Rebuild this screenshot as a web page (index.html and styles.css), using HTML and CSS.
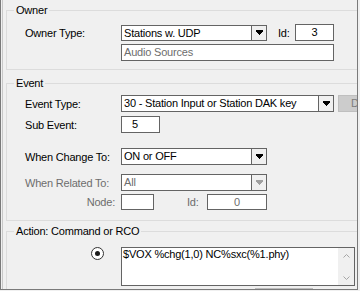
FILE: index.html
```html
<html>

<head>
    <title>Event Action</title>
    <link rel="stylesheet" href="styles.css">
</head>

<body>
    <div class="panel">
        <div class="sheet">
            <fieldset class="group owner">
                <legend>Owner</legend>
                <div class="row">
                    <span class="lbl">Owner Type:</span>
                    <div class="combo short">
                        <span class="val">Stations w. UDP</span>
                        <span class="drop"><svg width="7" height="5" viewBox="0 0 7 5"><path d="M0 0H7V2H6V3H5V4H4V5H3V4H2V3H1V2H0Z" fill="#000" shape-rendering="crispEdges"/></svg></span>
                    </div>
                    <span class="lbl-id">Id:</span>
                    <div class="box id center">3</div>
                </div>
                <div class="row gap3">
                    <span class="lbl"></span>
                    <div class="box long muted">Audio Sources</div>
                </div>
            </fieldset>

            <fieldset class="group event">
                <legend>Event</legend>
                <div class="row">
                    <span class="lbl">Event Type:</span>
                    <div class="combo long">
                        <span class="val">30 - Station Input or Station DAK key</span>
                        <span class="drop"><svg width="7" height="5" viewBox="0 0 7 5"><path d="M0 0H7V2H6V3H5V4H4V5H3V4H2V3H1V2H0Z" fill="#000" shape-rendering="crispEdges"/></svg></span>
                    </div>
                    <span class="btn">Details...</span>
                </div>
                <div class="row gap4">
                    <span class="lbl">Sub Event:</span>
                    <div class="box sub">5</div>
                </div>
                <div class="row gap15">
                    <span class="lbl">When Change To:</span>
                    <div class="combo short">
                        <span class="val">ON or OFF</span>
                        <span class="drop"><svg width="7" height="5" viewBox="0 0 7 5"><path d="M0 0H7V2H6V3H5V4H4V5H3V4H2V3H1V2H0Z" fill="#000" shape-rendering="crispEdges"/></svg></span>
                    </div>
                </div>
                <div class="row gap9">
                    <span class="lbl muted">When Related To:</span>
                    <div class="combo short">
                        <span class="val muted">All</span>
                        <span class="drop"><svg width="7" height="5" viewBox="0 0 7 5"><path d="M0 0H7V2H6V3H5V4H4V5H3V4H2V3H1V2H0Z" fill="#a0a0a0" shape-rendering="crispEdges"/></svg></span>
                    </div>
                </div>
                <div class="row gap3 small">
                    <span class="lbl right muted">Node:</span>
                    <div class="box node"></div>
                    <span class="lbl-id2 muted">Id:</span>
                    <div class="box id2 center muted">0</div>
                </div>
            </fieldset>

            <fieldset class="group action">
                <legend>Action: Command or RCO</legend>
                <div class="row top">
                    <span class="lbl radio-cell"><span class="radio"><span class="dot"></span></span></span>
                    <div class="memo">
                        <div class="memo-text">$VOX %chg(1,0) NC%sxc(%1.phy)</div>
                        <div class="vscroll">
                            <svg width="7" height="4" viewBox="0 0 7 4"><path d="M0.5 3.5L3.5 0.5L6.5 3.5" fill="none" stroke="#a6a6a6"/></svg>
                            <svg width="7" height="4" viewBox="0 0 7 4"><path d="M0.5 0.5L3.5 3.5L6.5 0.5" fill="none" stroke="#a6a6a6"/></svg>
                        </div>
                    </div>
                </div>
            </fieldset>
        </div>
        <div class="hthumb"></div>
    </div>
</body>

</html>
```

FILE: styles.css
```css
body {
    margin: 0;
    background: #f0f0f0;
    font-family: 'Liberation Sans', Arial, sans-serif;
    font-size: 11px;
    letter-spacing: -0.2px;
    color: #000;
}

.panel {
    position: relative;
    width: 358px;
    height: 290px;
    box-sizing: border-box;
    border: 1px solid #7a7a7a;
    border-top: 0;
    overflow: hidden;
    box-shadow: inset 1px 0 #f0f0f0, inset 2px 0 #c8c8c8;
}

.sheet {
    width: 440px;
    padding-top: 4px;
}

/* Group boxes */

.group {
    margin: 0 0 0 5px;
    border: 1px solid #dcdcdc;
    padding: 0;
    min-width: 0;
}

.group legend {
    margin-left: 7px;
    padding: 0 2px;
    line-height: 13px;
}

.owner {
    padding: 7px 0 8px;
}

.event {
    margin-top: 7px;
    padding: 5px 0 10px;
}

.action {
    margin-top: 4px;
    padding: 9px 0 12px;
}

/* Rows */

.row {
    display: flex;
    align-items: center;
    padding-left: 18px;
}

.row.top {
    align-items: flex-start;
}

.gap3 { margin-top: 3px; }
.gap4 { margin-top: 4px; }
.gap9 { margin-top: 9px; }
.gap15 { margin-top: 15px; }

.lbl {
    width: 96px;
    flex: none;
    white-space: nowrap;
}

.lbl.right {
    box-sizing: border-box;
    text-align: right;
    padding-right: 6px;
}

.lbl-id {
    width: 17px;
    margin-left: 11px;
}

.lbl-id2 {
    width: 20px;
    margin-left: 33px;
}

.muted {
    color: #6d6d6d;
}

/* Controls */

.combo {
    display: flex;
    box-sizing: border-box;
    height: 17px;
    border: 1px solid #646464;
    background: #fff;
}

.owner .combo {
    height: 16px;
}

.combo .val {
    flex: 1;
    padding-left: 2px;
    line-height: 15px;
    white-space: nowrap;
    overflow: hidden;
}

.owner .combo .val {
    line-height: 14px;
}

.combo .drop {
    width: 14px;
    border-left: 1px solid #646464;
    background: #f0f0f0;
    display: flex;
    align-items: center;
    justify-content: center;
}

.short { width: 146px; }
.long { width: 213px; }

.box {
    box-sizing: border-box;
    height: 17px;
    border: 1px solid #646464;
    background: #fff;
    line-height: 15px;
    padding-left: 2px;
    white-space: nowrap;
}

.small .box {
    height: 16px;
    line-height: 14px;
}

.center {
    text-align: center;
    padding-left: 0;
}

.id { width: 39px; }
.sub { width: 39px; padding-left: 10px; }
.node { width: 33px; }
.id2 { width: 60px; }

.btn {
    box-sizing: border-box;
    width: 75px;
    height: 17px;
    margin-left: 4px;
    padding-left: 12px;
    line-height: 15px;
    background: #cccccc;
    border: 1px solid #bfbfbf;
    color: #7c7c7c;
    white-space: nowrap;
}

/* Radio and memo */

.radio-cell {
    display: flex;
    justify-content: flex-end;
    box-sizing: border-box;
    padding-right: 17px;
}

.radio {
    display: flex;
    align-items: center;
    justify-content: center;
    box-sizing: border-box;
    width: 13px;
    height: 13px;
    border: 1px solid #333;
    border-radius: 50%;
    background: #fff;
}

.dot {
    width: 5px;
    height: 5px;
    border-radius: 50%;
    background: #1a1a1a;
}

.memo {
    display: flex;
    box-sizing: border-box;
    width: 234px;
    height: 39px;
    border: 1px solid #646464;
    background: #fff;
}

.memo-text {
    flex: 1;
    padding: 0 0 0 1px;
    line-height: 13px;
    white-space: nowrap;
}

.vscroll {
    width: 16px;
    background: #f0f0f0;
    display: flex;
    flex-direction: column;
    align-items: center;
    justify-content: space-between;
    padding: 6px 0 5px;
    box-sizing: border-box;
}

/* Horizontal scrollbar thumb peeking above the bottom edge */

.hthumb {
    position: absolute;
    left: 254px;
    bottom: 0;
    width: 58px;
    height: 1px;
    background: #bcbcbc;
}
```
